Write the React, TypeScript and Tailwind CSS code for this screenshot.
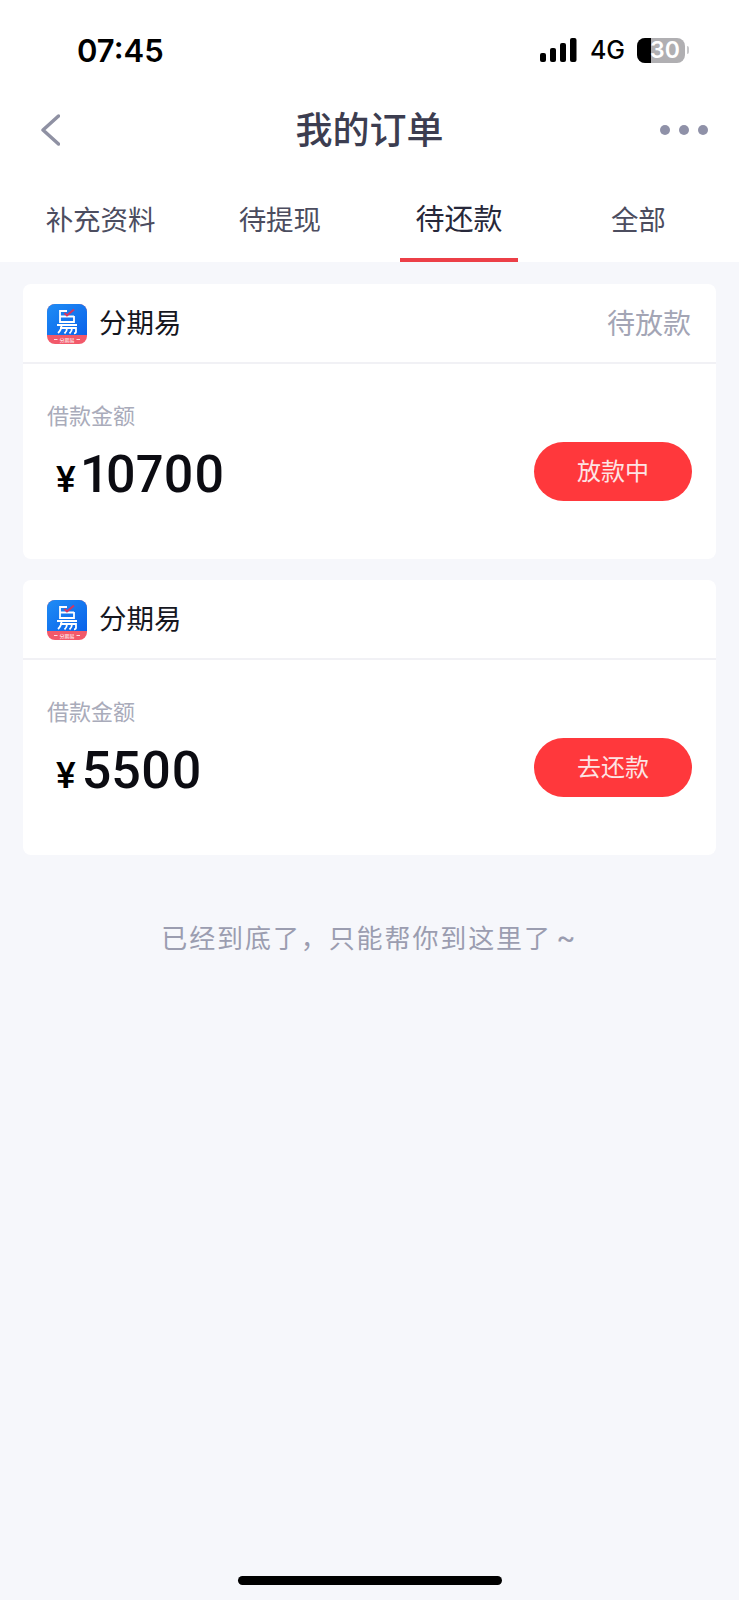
const cjk = "font-['Inter','Noto_Sans_CJK_SC',sans-serif]";

const tabs = [
  { label: "补充资料" },
  { label: "待提现" },
  { label: "待还款", active: true },
  { label: "全部" },
];

const orders = [
  { amount: "10700", action: "放款中", status: "待放款" },
  { amount: "5500", action: "去还款", status: "" },
];

function AppLogo() {
  return (
    <svg viewBox="0 0 40 40" className="h-10 w-10 shrink-0">
      <defs>
        <linearGradient id="logoBlue" x1="0" y1="0" x2="1" y2="1">
          <stop offset="0" stopColor="#1f8cf5" />
          <stop offset="1" stopColor="#0a62ea" />
        </linearGradient>
      </defs>
      <rect width="40" height="40" rx="8" fill="#f2596a" />
      <path d="M0 8a8 8 0 0 1 8-8h24a8 8 0 0 1 8 8v23H0z" fill="url(#logoBlue)" />
      <path d="M20 7h-7v11h14v-6M13 12.500h14" fill="none" stroke="#fff" strokeWidth="1.800" />
      <path d="M17.500 9l2.500 2.500 7-6" fill="none" stroke="#d6355f" strokeWidth="2" />
      <path d="M10 21h20" stroke="#fff" strokeWidth="2" />
      <path
        d="M14.500 21c0 3.500-1.200 6-3.500 8M20 24c0 2.500-.8 4-2.500 5.500M25 24c0 2.500-.8 4-2.500 5.500M13 24h16v3.500c0 1.200-.6 1.800-2 1.800"
        fill="none"
        stroke="#fff"
        strokeWidth="1.800"
      />
      <text x="20" y="37.500" textAnchor="middle" fontSize="5" fill="#fff" fontFamily="'Noto Sans CJK SC', sans-serif">
        分期易
      </text>
      <path d="M7 35.500h3.500M29.500 35.500h3.500" stroke="#fff" strokeWidth="0.800" />
    </svg>
  );
}

function StatusBar() {
  return (
    <div className="flex h-[98px] items-center justify-between pl-[77px] pr-[50px] pt-[2px]">
      <span className="font-['Inter',sans-serif] text-[31px] font-semibold leading-none text-black">07:45</span>
      <div className="flex items-center">
        <svg viewBox="0 0 37 24" className="h-[24px] w-[37px]">
          <rect x="0" y="15" width="6" height="9" rx="2" fill="#000" />
          <rect x="10" y="10" width="6" height="14" rx="2" fill="#000" />
          <rect x="20" y="5" width="6" height="19" rx="2" fill="#000" />
          <rect x="30" y="0" width="6.500" height="24" rx="2" fill="#000" />
        </svg>
        <span className="ml-[13px] font-['Inter',sans-serif] text-[25px] font-medium leading-none text-black">4G</span>
        <div className="ml-[12px] flex h-[25px] w-[48px] items-center rounded-[8px] bg-[#b0afb2]">
          <div className="h-[25px] w-[14px] rounded-l-[8px] bg-black" />
          <span className="-ml-[1px] font-['Inter',sans-serif] text-[23px] font-semibold leading-none text-white">30</span>
        </div>
        <div className="ml-[2px] h-[8px] w-[2px] rounded-r-full bg-[#c8c8ca]" />
      </div>
    </div>
  );
}

function NavBar() {
  return (
    <div className="flex h-[64px] items-center justify-between pl-[40px] pr-[31px]">
      <svg viewBox="0 0 20 32" className="h-[32px] w-[20px]">
        <path d="M18.500 2L3 16l15.500 14" fill="none" stroke="#8f91a3" strokeWidth="3.500" strokeLinecap="round" strokeLinejoin="round" />
      </svg>
      <h1 className={`${cjk} ml-[19px] text-[37px] font-medium leading-none text-[#3c3d50]`}>我的订单</h1>
      <div className="flex gap-[9px]">
        <span className="h-[10px] w-[10px] rounded-full bg-[#8f91a8]" />
        <span className="h-[10px] w-[10px] rounded-full bg-[#8f91a8]" />
        <span className="h-[10px] w-[10px] rounded-full bg-[#8f91a8]" />
      </div>
    </div>
  );
}

function Tabs() {
  return (
    <div className="grid h-[100px] grid-cols-4 px-[11px]">
      {tabs.map((tab) => (
        <div key={tab.label} className="flex flex-col items-center justify-end">
          <span
            className={
              tab.active
                ? `${cjk} text-[29px] leading-none text-[#27283a]`
                : `${cjk} text-[27.500px] leading-none text-[#4c4d5f]`
            }
          >
            {tab.label}
          </span>
          <div className={tab.active ? "mt-[24px] h-[4px] w-[118px] bg-[#ec3f47]" : "mt-[24px] h-[4px] w-[118px]"} />
        </div>
      ))}
    </div>
  );
}

function OrderCard({ amount, action, status }: { amount: string; action: string; status: string }) {
  return (
    <div className="rounded-[8px] bg-white">
      <div className="flex h-[80px] items-center justify-between border-b-2 border-[#f1f1f5] pl-[24px] pr-[25px] pt-[1px]">
        <div className="flex items-center gap-[12px]">
          <AppLogo />
          <span className={`${cjk} text-[27.500px] leading-none text-[#16171f]`}>分期易</span>
        </div>
        <span className={`${cjk} text-[28px] leading-none text-[#a3a5b5]`}>{status}</span>
      </div>
      <div className="flex h-[195px] flex-col pl-[24px] pr-[24px] pt-[41px]">
        <span className={`${cjk} text-[22px] leading-none text-[#a9abba]`}>借款金额</span>
        <div className="mt-[15px] flex items-center justify-between">
          <div className="flex items-baseline pl-[9px] pt-[6px]">
            <span className="font-['Roboto',sans-serif] text-[37px] font-medium leading-none text-black">¥</span>
            <span className="ml-[6px] font-['Roboto',sans-serif] text-[52px] font-medium leading-none text-[#0c0c12] proportional-nums">
              {amount}
            </span>
          </div>
          <button className={`${cjk} flex h-[59px] w-[158px] items-center justify-center rounded-full bg-[#ff383c] text-[24px] leading-none text-[#fde4e4]`}>
            {action}
          </button>
        </div>
      </div>
    </div>
  );
}

export default function App() {
  return (
    <div className="flex min-h-[1600px] flex-col bg-[#f6f7fb]">
      <div className="bg-white">
        <StatusBar />
        <NavBar />
        <Tabs />
      </div>
      <div className="flex flex-col gap-[21px] px-[23px] pt-[22px]">
        {orders.map((order) => (
          <OrderCard key={order.amount} {...order} />
        ))}
      </div>
      <p className={`${cjk} mt-[67px] text-center text-[26px] leading-none tracking-[1.900px] text-[#9b9db0]`}>
        已经到底了，只能帮你到这里了<span className="ml-[4px] text-[30px]">~</span>
      </p>
      <div className="mt-auto flex justify-center pb-[15px]">
        <div className="h-[9px] w-[264px] rounded-full bg-black" />
      </div>
    </div>
  );
}
